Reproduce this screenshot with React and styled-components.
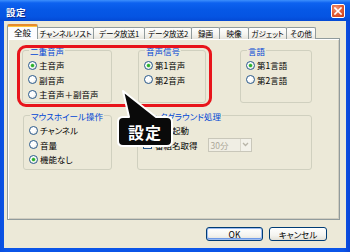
import React from "react";
import styled, { createGlobalStyle, css } from "styled-components";

const GlobalStyle = createGlobalStyle`
  html, body { margin: 0; padding: 0; background: #ffffff; }
  body {
    font-family: "Noto Sans CJK JP", "Noto Sans", sans-serif;
    font-feature-settings: "palt";
    -webkit-font-smoothing: antialiased;
  }
  * { box-sizing: border-box; }
`;

const Window = styled.div`
  position: relative;
  width: 350px;
  height: 252px;
  display: flex;
  flex-direction: column;
  background: linear-gradient(90deg, #0a4fe0 0%, #0b55e8 2%, #0b55e8 98%, #0a45d6 100%);
  overflow: hidden;
`;

const TitleBar = styled.div`
  height: 21px;
  flex: none;
  display: flex;
  align-items: center;
  justify-content: space-between;
  padding: 2px 5px 0 6px;
  background: linear-gradient(
    180deg,
    #3d8ffc 0%,
    #0d62f0 14%,
    #0658e6 45%,
    #0554e2 80%,
    #0449d4 100%
  );
`;

const Title = styled.span`
  color: #ffffff;
  font-weight: 700;
  font-size: 9.5px;
  letter-spacing: 0.5px;
  text-shadow: 1px 1px 0 #0a2a8a;
`;

const CloseButton = styled.div`
  width: 14px;
  height: 14px;
  margin-top: -1px;
  border: 1px solid #ffffff;
  border-radius: 2px;
  background: radial-gradient(circle at 35% 30%, #f29a7a 0%, #e2603a 45%, #c73c16 100%);
  display: flex;
  align-items: center;
  justify-content: center;
`;

const Client = styled.div`
  flex: 1;
  margin: 0 4px 4px 4px;
  background: #ece9d8;
  display: flex;
  flex-direction: column;
  padding: 3px 6px 0 3px;
`;

const TabStrip = styled.div`
  display: flex;
  align-items: flex-end;
  height: 15px;
  margin-bottom: -1px;
  position: relative;
  z-index: 1;
`;

const Tab = styled.div`
  width: ${(p) => p.$w}px;
  display: flex;
  align-items: center;
  justify-content: center;
  font-size: 7.6px;
  letter-spacing: -0.1px;
  color: #000;
  white-space: nowrap;
  overflow: hidden;
  border: 1px solid #919b9c;
  border-bottom: none;
  border-radius: 2px 2px 0 0;
  ${(p) =>
    p.$active
      ? css`
          height: 15px;
          font-size: 8.5px;
          background: #fcfcfe;
          border-top: 2px solid #e68b2c;
          box-shadow: inset 0 1px 0 #ffc73c;
          padding-bottom: 1px;
        `
      : css`
          height: 12px;
          margin-left: -1px;
          background: linear-gradient(180deg, #ffffff 0%, #f4f3ee 60%, #e6e4dc 100%);
        `}
`;

const Panel = styled.div`
  height: 182px;
  border: 1px solid #919b9c;
  background: #ece9d8;
  box-shadow: inset 1px 1px 0 #ffffff, inset -1px -1px 0 #d0cdc0;
  padding: 11px 0 0 14px;
`;

const PanelGrid = styled.div`
  display: grid;
  grid-template-columns: 90px 26px 68px 34px 72px;
  grid-template-rows: 53px 55px;
  row-gap: 12px;
`;

const GroupBox = styled.div`
  grid-column: ${(p) => p.$col};
  margin-left: ${(p) => p.$shift || 0}px;
  border: 1px solid #d0d0bf;
  border-radius: 3px;
  padding: 0 0 0 5px;
`;

const GroupTitle = styled.div`
  margin: -6px 0 0 1px;
  height: 12px;
  line-height: 12px;
  width: fit-content;
  padding: 0 1px;
  background: #ece9d8;
  color: #0046d5;
  font-size: 8.5px;
  white-space: nowrap;
`;

const OptionList = styled.div`
  margin-top: 1px;
  display: flex;
  flex-direction: column;
`;

const Option = styled.label`
  display: flex;
  align-items: center;
  height: 14.5px;
  gap: 2px;
  font-size: 8.5px;
  color: #000;
  white-space: nowrap;
`;

const RadioCircle = styled.span`
  width: 9px;
  height: 9px;
  border-radius: 50%;
  border: 1px solid #2a5a8e;
  background: radial-gradient(circle at 35% 35%, #ffffff 40%, #dcdcd6 100%);
  display: flex;
  align-items: center;
  justify-content: center;
  flex: none;
  &::after {
    content: "";
    width: 3px;
    height: 3px;
    border-radius: 50%;
    background: ${(p) => (p.$checked ? "#2bae2b" : "transparent")};
    box-shadow: ${(p) => (p.$checked ? "0 0 0 0.5px #7fd57f" : "none")};
  }
`;

const CheckBox = styled.span`
  width: 9px;
  height: 9px;
  border: 1px solid #2a5a8e;
  background: linear-gradient(135deg, #dcdcd6 0%, #ffffff 100%);
  flex: none;
  margin-right: 1px;
`;

const Select = styled.div`
  margin-left: 8px;
  width: 44px;
  height: 14px;
  border: 1px solid #c9c7ba;
  background: #f0eee4;
  display: flex;
  align-items: center;
  justify-content: space-between;
  padding-left: 2px;
  font-size: 8.5px;
  color: #aca899;
`;

const SelectArrow = styled.span`
  width: 11px;
  height: 12px;
  border-left: 1px solid #dad8cc;
  background: #f3f2ea;
  display: flex;
  align-items: center;
  justify-content: center;
`;

const ButtonRow = styled.div`
  display: flex;
  justify-content: flex-end;
  gap: 6px;
  margin-top: 7px;
  padding-right: 13px;
`;

const Button = styled.div`
  width: ${(p) => p.$w}px;
  height: 14px;
  border: 1px solid #003c74;
  border-radius: 3px;
  background: linear-gradient(180deg, #ffffff 0%, #f4f4f0 60%, #e3e1d8 100%);
  display: flex;
  align-items: center;
  justify-content: center;
  font-size: 8.5px;
  color: #000;
  ${(p) =>
    p.$default &&
    css`
      box-shadow: inset 0 0 0 1px #9dbcf0, inset 0 -1px 0 1px #6f9ae6;
    `}
`;

const Highlight = styled.div`
  position: absolute;
  left: 17px;
  top: 45px;
  width: 195px;
  height: 62px;
  border: 3px solid #e8141b;
  border-radius: 9px;
  pointer-events: none;
`;

const Callout = styled.div`
  position: absolute;
  left: 110px;
  top: 85px;
  width: 70px;
  height: 66px;
`;

const CalloutShape = styled.svg`
  position: absolute;
  inset: 0;
`;

const CalloutText = styled.div`
  position: absolute;
  left: 8px;
  top: 32px;
  width: 54px;
  height: 29px;
  display: flex;
  align-items: center;
  justify-content: center;
  color: #ffffff;
  font-weight: 700;
  font-size: 16px;
  letter-spacing: 1px;
`;

const tabs = [
  { label: "全般", w: 31, active: true },
  { label: "チャンネルリスト", w: 57 },
  { label: "データ放送1", w: 52 },
  { label: "データ放送2", w: 48 },
  { label: "録画", w: 29 },
  { label: "映像", w: 30 },
  { label: "ガジェット", w: 39 },
  { label: "その他", w: 30 },
];

function Radio({ checked, children }) {
  return (
    <Option>
      <RadioCircle $checked={checked} />
      {children}
    </Option>
  );
}

function Group({ col, shift, title, children }) {
  return (
    <GroupBox $col={col} $shift={shift}>
      <GroupTitle>{title}</GroupTitle>
      <OptionList>{children}</OptionList>
    </GroupBox>
  );
}

export default function App() {
  return (
    <>
      <GlobalStyle />
      <Window>
        <TitleBar>
          <Title>設定</Title>
          <CloseButton>
            <svg width="8" height="8" viewBox="0 0 8 8">
              <path d="M1 1 L7 7 M7 1 L1 7" stroke="#ffffff" strokeWidth="1.6" strokeLinecap="square" />
            </svg>
          </CloseButton>
        </TitleBar>
        <Client>
          <TabStrip>
            {tabs.map((t) => (
              <Tab key={t.label} $w={t.w} $active={t.active}>
                {t.label}
              </Tab>
            ))}
          </TabStrip>
          <Panel>
            <PanelGrid>
              <Group col="1" title="二重音声">
                <Radio checked>主音声</Radio>
                <Radio>副音声</Radio>
                <Radio>主音声＋副音声</Radio>
              </Group>
              <Group col="3" title="音声信号">
                <Radio checked>第1音声</Radio>
                <Radio>第2音声</Radio>
              </Group>
              <Group col="5" title="言語">
                <Radio checked>第1言語</Radio>
                <Radio>第2言語</Radio>
              </Group>
              <Group col="1" shift={1} title="マウスホイール操作">
                <Radio>チャンネル</Radio>
                <Radio>音量</Radio>
                <Radio checked>機能なし</Radio>
              </Group>
              <Group col="3 / span 3" shift={-1} title="バックグラウンド処理">
                <Option>
                  <CheckBox />
                  自動起動
                </Option>
                <Option>
                  <CheckBox />
                  番組名取得
                  <Select>
                    30分
                    <SelectArrow>
                      <svg width="7" height="5" viewBox="0 0 7 5">
                        <path d="M1 1 L3.5 3.5 L6 1" fill="none" stroke="#b8b5a8" strokeWidth="1.3" />
                      </svg>
                    </SelectArrow>
                  </Select>
                </Option>
              </Group>
            </PanelGrid>
          </Panel>
          <ButtonRow>
            <Button $w={57} $default>
              OK
            </Button>
            <Button $w={58}>キャンセル</Button>
          </ButtonRow>
        </Client>
        <Highlight />
        <Callout>
          <CalloutShape width="70" height="66" viewBox="0 0 70 66">
            <path
              d="M13 6 L46 32 H57 Q62 32 62 37 V56 Q62 61 57 61 H13 Q8 61 8 56 V37 Q8 32 13 32 H19 Z"
              fill="#0a0a0a"
              stroke="#ffffff"
              strokeWidth="2"
              strokeLinejoin="round"
            />
          </CalloutShape>
          <CalloutText>設定</CalloutText>
        </Callout>
      </Window>
    </>
  );
}
